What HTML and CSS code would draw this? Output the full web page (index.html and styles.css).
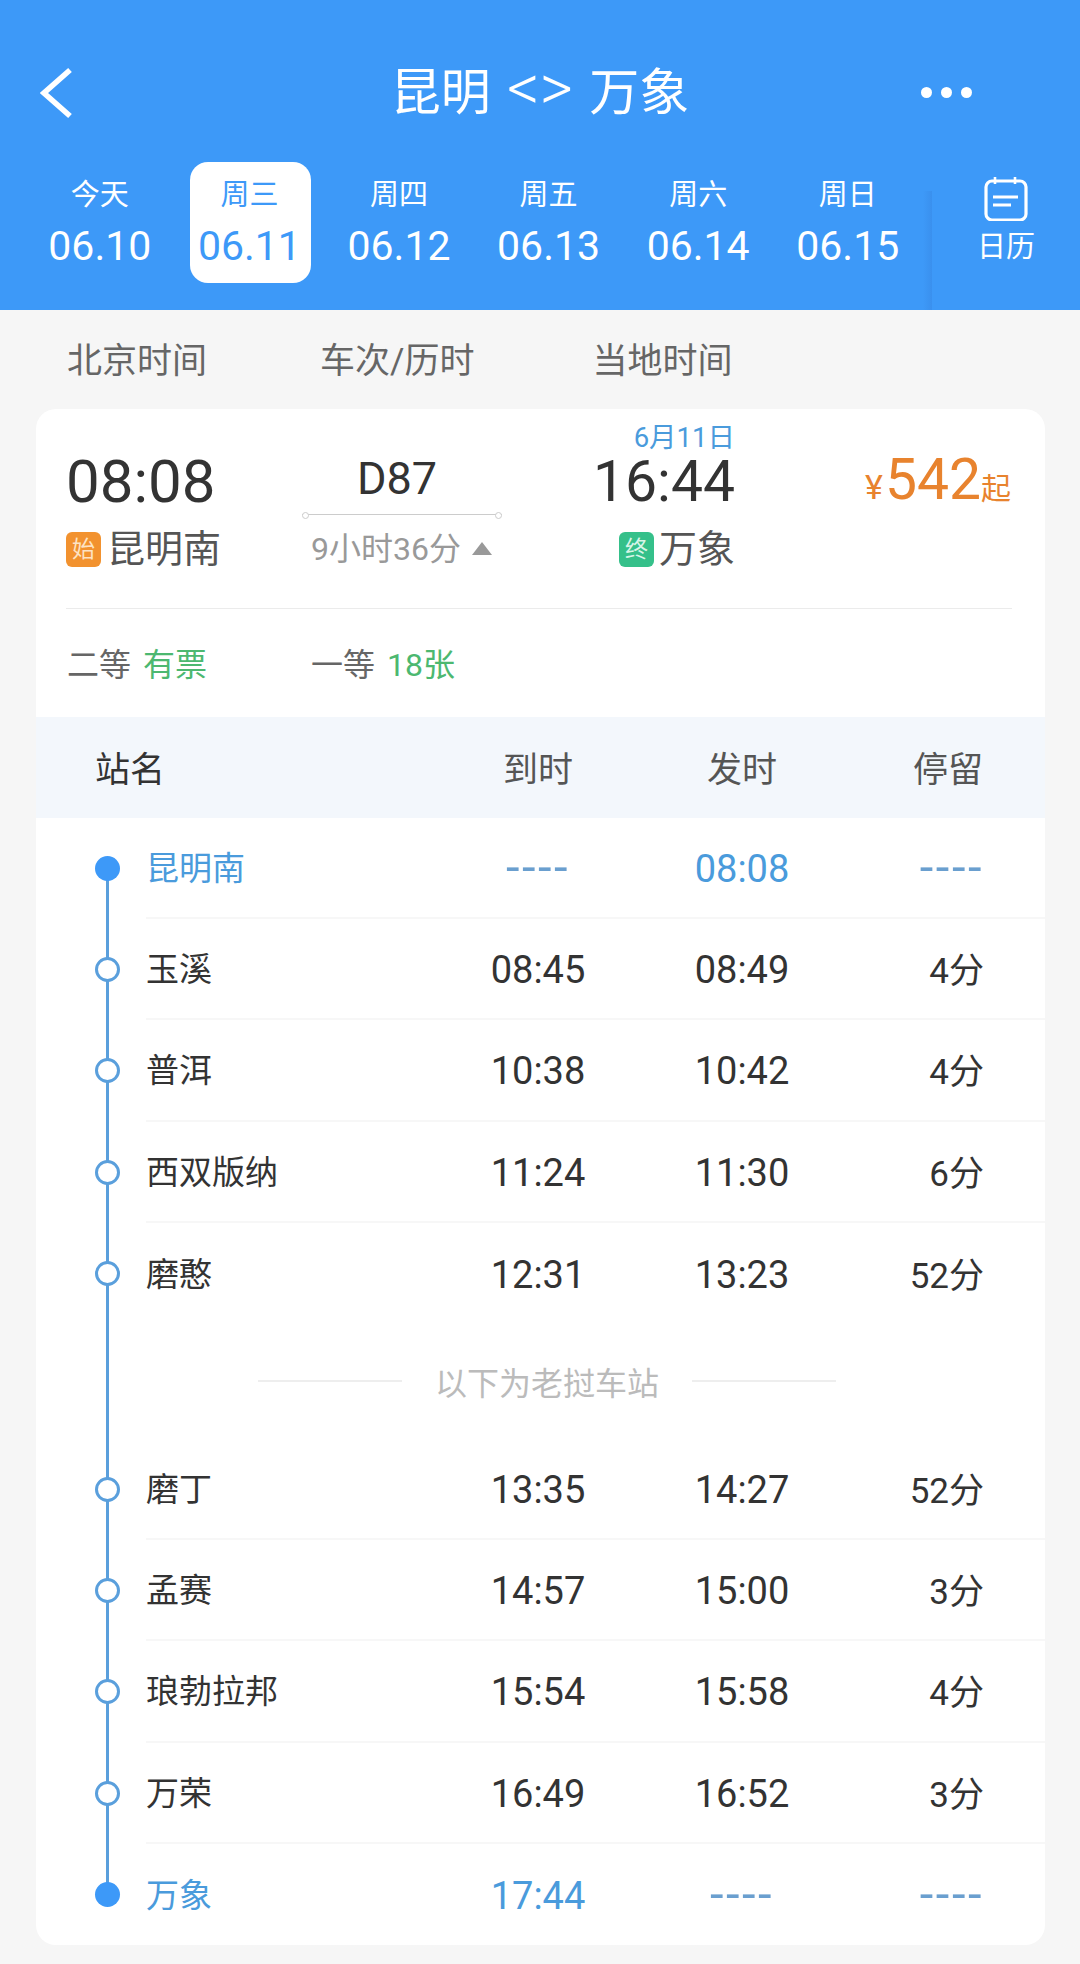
FILE: index.html
```html
<!DOCTYPE html>
<html lang="zh-CN">
<head>
    <meta charset="UTF-8">
    <title>昆明 &lt;&gt; 万象</title>
    <link rel="stylesheet" href="styles.css">
</head>
<body>
    <header>
        <div class="top-bar">
            <svg class="back-icon" width="34" height="52" viewBox="0 0 34 52"><path d="M30 3 L4 26 L30 49" fill="none" stroke="#fff" stroke-width="5.5"/></svg>
            <h1>昆明 <span>&lt;&gt;</span> 万象</h1>
            <div class="more"><span></span><span></span><span></span></div>
        </div>
        <div class="date-bar">
            <div class="date-list">
                <div class="date-item"><span class="week">今天</span><span class="day">06.10</span></div>
                <div class="date-item active"><span class="week">周三</span><span class="day">06.11</span></div>
                <div class="date-item"><span class="week">周四</span><span class="day">06.12</span></div>
                <div class="date-item"><span class="week">周五</span><span class="day">06.13</span></div>
                <div class="date-item"><span class="week">周六</span><span class="day">06.14</span></div>
                <div class="date-item"><span class="week">周日</span><span class="day">06.15</span></div>
            </div>
            <div class="date-sep"></div>
            <div class="calendar">
                <svg width="44" height="44" viewBox="0 0 44 44" fill="none" stroke="#fff">
                    <rect x="2" y="4" width="40" height="39" rx="6" stroke-width="3.2"/>
                    <path d="M11 0 V7 M31 0 V7" stroke-width="2.6"/>
                    <path d="M9 20 H34 M9 28 H27" stroke-width="3"/>
                </svg>
                <span>日历</span>
            </div>
        </div>
    </header>

    <div class="sub-head">
        <span>北京时间</span>
        <span>车次/历时</span>
        <span>当地时间</span>
    </div>

    <div class="card">
        <div class="train">
            <div class="arr-date">6月11日</div>
            <div class="time dep-time">08:08</div>
            <div class="code">D87</div>
            <div class="time arr-time">16:44</div>
            <div class="price"><small>¥</small>542<em>起</em></div>
            <div class="track"></div>
            <div class="station dep-station"><b class="tag start">始</b>昆明南</div>
            <div class="duration">9小时36分<i></i></div>
            <div class="station arr-station"><b class="tag end">终</b>万象</div>
        </div>

        <div class="tickets">
            <span class="seat">二等 <u>有票</u></span>
            <span class="seat">一等 <u>18张</u></span>
        </div>

        <div class="stop-head">
            <span>站名</span>
            <span>到时</span>
            <span>发时</span>
            <span>停留</span>
        </div>

        <div class="stops">
            <div class="timeline"></div>
            <div class="stop main"><i class="dot"></i><span>昆明南</span><span class="dash">----</span><span>08:08</span><span class="dash">----</span></div>
            <div class="stop"><i class="dot"></i><span>玉溪</span><span>08:45</span><span>08:49</span><span>4分</span></div>
            <div class="stop"><i class="dot"></i><span>普洱</span><span>10:38</span><span>10:42</span><span>4分</span></div>
            <div class="stop"><i class="dot"></i><span>西双版纳</span><span>11:24</span><span>11:30</span><span>6分</span></div>
            <div class="stop no-line"><i class="dot"></i><span>磨憨</span><span>12:31</span><span>13:23</span><span>52分</span></div>
            <div class="notice"><span>以下为老挝车站</span></div>
            <div class="stop"><i class="dot"></i><span>磨丁</span><span>13:35</span><span>14:27</span><span>52分</span></div>
            <div class="stop"><i class="dot"></i><span>孟赛</span><span>14:57</span><span>15:00</span><span>3分</span></div>
            <div class="stop"><i class="dot"></i><span>琅勃拉邦</span><span>15:54</span><span>15:58</span><span>4分</span></div>
            <div class="stop"><i class="dot"></i><span>万荣</span><span>16:49</span><span>16:52</span><span>3分</span></div>
            <div class="stop main no-line"><i class="dot"></i><span>万象</span><span>17:44</span><span class="dash">----</span><span class="dash">----</span></div>
        </div>
    </div>
</body>
</html>
```

FILE: styles.css
```css
* {
    margin: 0;
    padding: 0;
    box-sizing: border-box;
    font-family: Roboto, "Noto Sans CJK SC", sans-serif;
}

body {
    width: 1080px;
    height: 1964px;
    overflow: hidden;
    background: #f6f6f6;
    color: #333;
}

/* Header */
header {
    height: 310px;
    background: #3d99f8;
    color: white;
}

.top-bar {
    position: relative;
    height: 162px;
    padding: 67px 0 0 40px;
}

.back-icon {
    display: block;
}

.top-bar h1 {
    position: absolute;
    left: 0;
    right: 0;
    top: 60px;
    text-align: center;
    font-size: 50px;
    line-height: 66px;
    font-weight: 400;
}

.top-bar h1 span {
    margin: 0 4px;
    font-size: 64px;
    line-height: 50px;
    font-weight: 300;
}

.more {
    position: absolute;
    left: 921px;
    top: 87px;
    display: flex;
    gap: 9px;
}

.more span {
    width: 11px;
    height: 11px;
    border-radius: 50%;
    background: white;
}

/* Datumsleiste */
.date-bar {
    display: flex;
    height: 148px;
}

.date-list {
    display: flex;
    width: 898px;
    margin-left: 25px;
}

.date-item {
    width: 149.6px;
    height: 121px;
    display: flex;
    flex-direction: column;
    align-items: center;
}

.date-item.active {
    position: relative;
    color: #3d99f8;
}

.date-item.active::before {
    content: "";
    position: absolute;
    top: 0;
    bottom: 0;
    left: 15px;
    width: 121px;
    background: white;
    border-radius: 18px;
}

.date-item span {
    position: relative;
}

.week {
    margin-top: 14px;
    font-size: 29px;
    line-height: 38px;
}

.day {
    margin-top: 7px;
    font-size: 41px;
    line-height: 50px;
}

.date-sep {
    width: 9px;
    height: 119px;
    margin-top: 29px;
    background: linear-gradient(90deg, rgba(56, 140, 236, 0), #3a90ee);
}

.calendar {
    width: 148px;
    padding-top: 15px;
    display: flex;
    flex-direction: column;
    align-items: center;
    font-size: 29px;
    line-height: 36px;
}

.calendar span {
    margin-top: 8px;
}

/* Spaltenkopf */
.sub-head {
    display: flex;
    height: 99px;
    padding: 0 0 4px 67px;
    align-items: center;
    gap: 113px;
    font-size: 35px;
    color: #666;
}

.sub-head span:nth-child(3) {
    margin-left: 5px;
}

/* Karte */
.card {
    width: 1009px;
    height: 1536px;
    margin-left: 36px;
    background: white;
    border-radius: 20px;
    overflow: hidden;
}

.train {
    display: grid;
    grid-template-columns: 236px 200px 233px 277px;
    grid-template-rows: 32px 52px 18px 50px;
    margin: 0 33px 0 30px;
    padding: 13px 0 36px;
    height: 200px;
    border-bottom: 1px solid #ebebeb;
}

.arr-date {
    grid-column: 3;
    grid-row: 1;
    text-align: right;
    font-size: 27.5px;
    line-height: 32px;
    color: #4a9bdc;
}

.time {
    grid-row: 2;
    padding-top: 2px;
    font-size: 60px;
    line-height: 52px;
    color: #333;
}

.dep-time { grid-column: 1; }
.arr-time { grid-column: 3; text-align: right; font-size: 57px; }

.code {
    grid-column: 2;
    grid-row: 2;
    padding-right: 10px;
    text-align: center;
    font-size: 45px;
    line-height: 50px;
}

.price {
    grid-column: 4;
    grid-row: 2;
    text-align: right;
    font-size: 57px;
    line-height: 52px;
    color: #e8832e;
}

.price small {
    font-size: 34px;
    margin-right: 2px;
}

.price em {
    font-size: 30px;
    font-style: normal;
    margin-right: 1px;
}

.track {
    grid-column: 2;
    grid-row: 3;
    position: relative;
    margin-top: 8px;
    height: 1px;
    background: #ccc;
}

.track::before,
.track::after {
    content: "";
    position: absolute;
    top: -2px;
    width: 5px;
    height: 5px;
    border: 1px solid #ccc;
    border-radius: 50%;
    background: white;
}

.track::before { left: 0; }
.track::after { right: 0; }

.station {
    grid-row: 4;
    display: flex;
    align-items: center;
    font-size: 38px;
    line-height: 50px;
    color: #555;
}

.dep-station { grid-column: 1; }
.arr-station { grid-column: 3; justify-content: flex-end; }

.tag {
    width: 35px;
    height: 35px;
    margin-right: 6px;
    border-radius: 6px;
    color: white;
    font-size: 23px;
    font-weight: 400;
    line-height: 35px;
    text-align: center;
}

.arr-station .tag {
    margin-right: 5px;
}

.tag.start { background: #f2922f; color: #fde3c4; }
.tag.end { background: #35c08a; color: #d8f5e8; }

.duration {
    grid-column: 2;
    grid-row: 4;
    display: flex;
    align-items: center;
    padding: 0 0 6px 9px;
    font-size: 32px;
    color: #999;
}

.duration i {
    margin: 4px 0 0 11px;
    border-left: 10px solid transparent;
    border-right: 10px solid transparent;
    border-bottom: 13px solid #999;
}

.tickets {
    display: flex;
    height: 108px;
    padding: 0 0 3px 31px;
    align-items: center;
    gap: 104px;
    font-size: 32px;
    color: #666;
}

.tickets u {
    margin-left: 4px;
    text-decoration: none;
    color: #4cb870;
}

/* Tabelle */
.stop-head {
    display: grid;
    grid-template-columns: 345px 196px 212px 135px;
    height: 101px;
    padding: 0 0 3px 59px;
    align-items: center;
    background: #f3f7fc;
    font-size: 35px;
    color: #555;
}

.stop-head span:first-child {
    color: #333;
}

.stop-head span:nth-child(2),
.stop-head span:nth-child(3) {
    text-align: center;
}

.stop-head span:nth-child(4) {
    text-align: right;
}

.stops {
    position: relative;
}

.timeline {
    position: absolute;
    left: 70px;
    top: 50px;
    height: 1028px;
    width: 3px;
    background: #5a9fdc;
}

.stop {
    position: relative;
    display: grid;
    grid-template-columns: 294px 196px 212px 136px;
    height: 101.2px;
    margin-left: 110px;
    align-items: center;
    border-bottom: 2px solid #f7f7f7;
    font-size: 35px;
    color: #333;
}

.stop.no-line {
    border-bottom: none;
}

.stop span:first-of-type {
    padding-top: 3px;
    font-size: 33px;
    line-height: 40px;
}

.stop span:nth-of-type(2),
.stop span:nth-of-type(3) {
    padding-top: 3px;
    text-align: center;
    font-size: 38px;
}

.stop span:nth-of-type(4) {
    padding-bottom: 2px;
    text-align: right;
}

.stop.main {
    color: #4a9bdc;
}

.stop span.dash {
    padding: 0;
    font-size: 49px;
    line-height: 1;
    letter-spacing: 2.5px;
    color: #6a9fcf;
}

.dot {
    position: absolute;
    left: -51px;
    top: 38px;
    width: 25px;
    height: 25px;
    border: 3px solid #5a9fdc;
    border-radius: 50%;
    background: white;
}

.stop.main .dot {
    border: none;
    background: #3d99f8;
}

.notice {
    display: flex;
    height: 115px;
    margin-left: 222px;
    width: 578px;
    align-items: center;
    justify-content: space-between;
    font-size: 32px;
    color: #bbb;
}

.notice::before,
.notice::after {
    content: "";
    width: 144px;
    height: 2px;
    background: #eee;
}
```
